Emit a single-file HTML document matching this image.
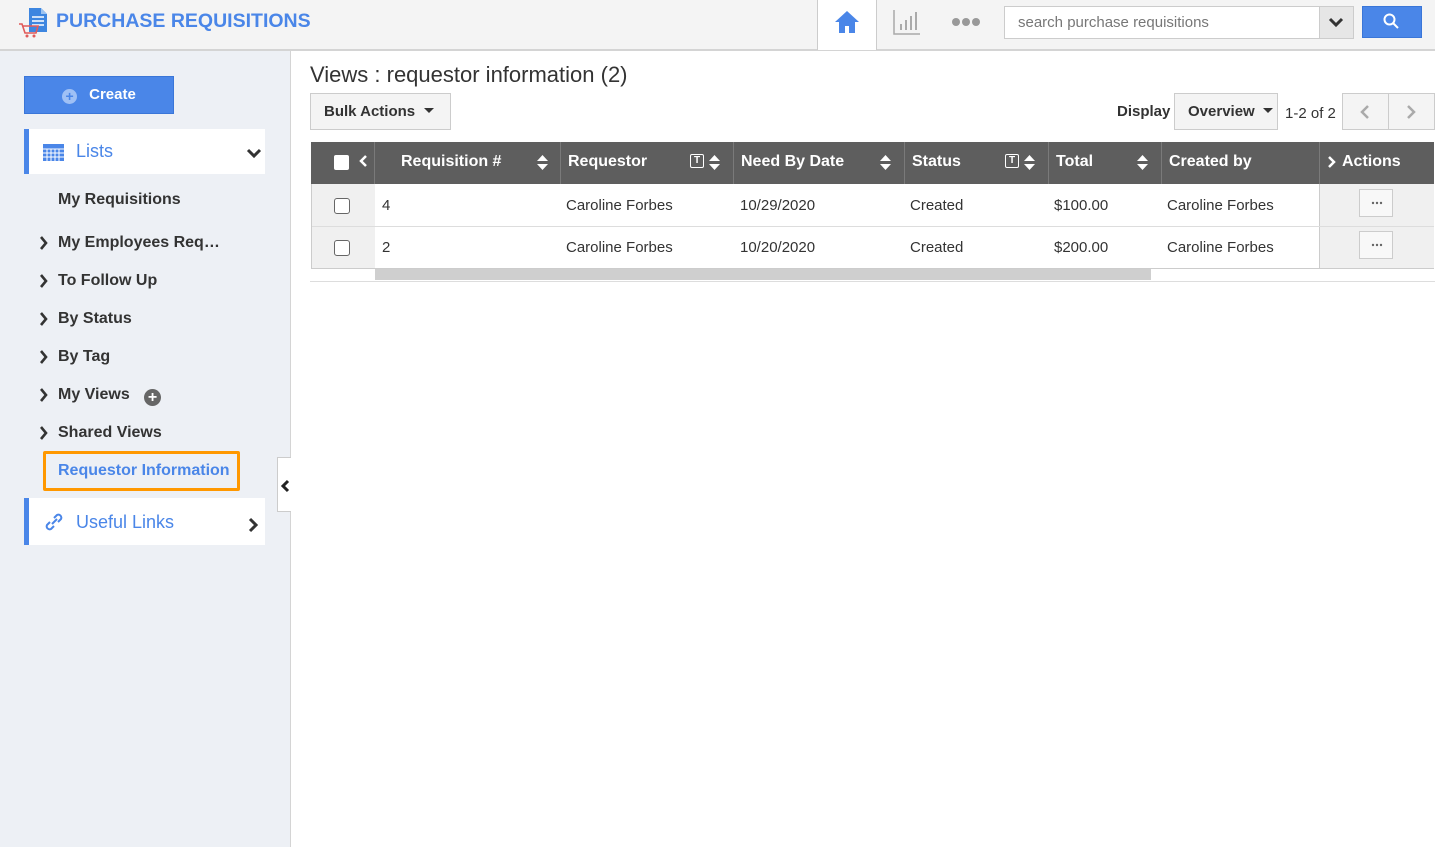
<!DOCTYPE html>
<html><head><meta charset="utf-8"><style>
*{box-sizing:border-box;margin:0;padding:0}
body{width:1435px;height:847px;position:relative;font-family:"Liberation Sans",Arial,sans-serif;background:#fff;overflow:hidden;color:#333}
.a{position:absolute}
.hdr{left:0;top:0;width:1435px;height:51px;background:#f4f4f4;border-bottom:2px solid #d4d4d4}
.side{left:0;top:51px;width:291px;height:796px;background:#edf0f5;border-right:1px solid #d4d4d4}
.nav{font-size:16px;font-weight:bold;color:#333}
.th{top:142px;height:42px;background:#5e5e5e;color:#fff;font-weight:bold;font-size:16px;line-height:40px;border-right:1px solid #7a7a7a;padding-left:7px}
.td{font-size:15px;line-height:42px;color:#333}
.cb{width:16px;height:16px;border:1px solid #666;border-radius:3px;background:#fff}
.srt{position:absolute;top:13px}
.flt{position:absolute;top:12px;width:14px;height:14px;border:1.5px solid #fff;border-radius:2px;font-size:10px;line-height:11px;text-align:center}
</style></head><body>
<div class="a hdr"></div>
<svg class="a" style="left:17px;top:6px" width="32" height="32" viewBox="0 0 32 32"><path d="M12 2h12l6 6v18H12z" fill="#3d86e0"/><path d="M24 2v6h6" fill="#9cc3f0"/><path d="M15 11h12M15 15h12M15 19h12" stroke="#fff" stroke-width="1.5"/><path d="M2 18h3l3 9h11l2-7H6" fill="none" stroke="#e05a5a" stroke-width="1.6"/><circle cx="10" cy="30" r="1.5" fill="#e05a5a"/><circle cx="17" cy="30" r="1.5" fill="#e05a5a"/></svg>
<div class="a" style="left:56px;top:10px;font-size:19.5px;font-weight:bold;color:#4a86e8">PURCHASE REQUISITIONS</div>
<div class="a" style="left:817px;top:0;width:60px;height:50px;background:#fff;border-left:1px solid #ccc;border-right:1px solid #ccc"></div>
<svg class="a" style="left:833px;top:8px" width="28" height="28" viewBox="0 0 28 28"><path d="M14 3L2 14h4v11h6v-7h4v7h6V14h4z" fill="#4a86e8"/></svg>
<svg class="a" style="left:892px;top:8px" width="30" height="28" viewBox="0 0 30 28"><path d="M2 2v24h26" fill="none" stroke="#aaa" stroke-width="1.5"/><path d="M9 22v-6M14 22v-10M19 22v-14M24 22v-18" stroke="#aaa" stroke-width="2"/></svg>
<svg class="a" style="left:951px;top:17px" width="30" height="10" viewBox="0 0 30 10"><circle cx="5" cy="5" r="4" fill="#999"/><circle cx="15" cy="5" r="4" fill="#999"/><circle cx="25" cy="5" r="4" fill="#999"/></svg>
<div class="a" style="left:1004px;top:6px;width:350px;height:33px;background:#fff;border:1px solid #ccc"></div>
<div class="a" style="left:1018px;top:14px;font-size:15px;color:#777">search purchase requisitions</div>
<div class="a" style="left:1319px;top:7px;width:34px;height:31px;background:#e6e6e6;border-left:1px solid #ccc"></div>
<svg class="a" style="left:1328px;top:17px" width="16" height="12" viewBox="0 0 16 12"><path d="M2 2l6 6 6-6" fill="none" stroke="#333" stroke-width="3"/></svg>
<div class="a" style="left:1362px;top:6px;width:60px;height:32px;background:#4a86e8;border:1px solid #3a76d8"></div>
<svg class="a" style="left:1382px;top:12px" width="18" height="18" viewBox="0 0 18 18"><circle cx="7.5" cy="7.5" r="5" fill="none" stroke="#fff" stroke-width="2"/><path d="M11 11l5 5" stroke="#fff" stroke-width="2"/></svg>

<div class="a side"></div>
<div class="a" style="left:24px;top:76px;width:150px;height:38px;background:#4a86e8;border:1px solid #3a76d8;color:#fff;font-weight:bold;font-size:15px;line-height:36px;text-align:center"><span style="display:inline-block;width:15px;height:15px;border-radius:50%;background:#9fc0f5;color:#4a86e8;font-size:14px;line-height:15px;margin-right:12px;vertical-align:-2px">+</span>Create</div>
<div class="a" style="left:24px;top:129px;width:241px;height:45px;background:#fff;border-left:5px solid #4a86e8"></div>
<svg class="a" style="left:43px;top:144px" width="21" height="17" viewBox="0 0 21 17"><rect x="0" y="0" width="21" height="17" fill="#4a86e8"/><path d="M0 5h21M0 9h21M0 13h21M4 5v12M8 5v12M12 5v12M16 5v12" stroke="#fff" stroke-width="1"/></svg>
<div class="a" style="left:76px;top:141px;font-size:18px;color:#4a86e8">Lists</div>
<svg class="a" style="left:246px;top:148px" width="16" height="12" viewBox="0 0 16 12"><path d="M2 2l6 6 6-6" fill="none" stroke="#333" stroke-width="3"/></svg>
<div class="a nav" style="left:58px;top:191px">My Requisitions</div>
<svg class="a" style="left:39px;top:235px" width="10" height="16" viewBox="0 0 10 16"><path d="M2 2l5 6-5 6" fill="none" stroke="#333" stroke-width="2.6"/></svg>
<div class="a nav" style="left:58px;top:234px">My Employees Req…</div>
<svg class="a" style="left:39px;top:273px" width="10" height="16" viewBox="0 0 10 16"><path d="M2 2l5 6-5 6" fill="none" stroke="#333" stroke-width="2.6"/></svg>
<div class="a nav" style="left:58px;top:272px">To Follow Up</div>
<svg class="a" style="left:39px;top:311px" width="10" height="16" viewBox="0 0 10 16"><path d="M2 2l5 6-5 6" fill="none" stroke="#333" stroke-width="2.6"/></svg>
<div class="a nav" style="left:58px;top:310px">By Status</div>
<svg class="a" style="left:39px;top:349px" width="10" height="16" viewBox="0 0 10 16"><path d="M2 2l5 6-5 6" fill="none" stroke="#333" stroke-width="2.6"/></svg>
<div class="a nav" style="left:58px;top:348px">By Tag</div>
<svg class="a" style="left:39px;top:387px" width="10" height="16" viewBox="0 0 10 16"><path d="M2 2l5 6-5 6" fill="none" stroke="#333" stroke-width="2.6"/></svg>
<div class="a nav" style="left:58px;top:386px">My Views</div>
<div class="a" style="left:144px;top:389px;width:17px;height:17px;border-radius:50%;background:#666;color:#fff;font-weight:bold;font-size:16px;line-height:17px;text-align:center">+</div>
<svg class="a" style="left:39px;top:425px" width="10" height="16" viewBox="0 0 10 16"><path d="M2 2l5 6-5 6" fill="none" stroke="#333" stroke-width="2.6"/></svg>
<div class="a nav" style="left:58px;top:424px">Shared Views</div>
<div class="a" style="left:43px;top:451px;width:197px;height:40px;border:3px solid #ff9800;border-radius:2px"></div>
<div class="a" style="left:58px;top:462px;font-size:16px;font-weight:bold;color:#4a86e8">Requestor Information</div>
<div class="a" style="left:24px;top:498px;width:241px;height:47px;background:#fff;border-left:5px solid #4a86e8"></div>
<svg class="a" style="left:44px;top:513px" width="20" height="18" viewBox="0 0 20 18"><path d="M8 11l5-5M6 9l-3 3a3 3 0 004 4l3-3M14 9l3-3a3 3 0 00-4-4l-3 3" fill="none" stroke="#4a86e8" stroke-width="2"/></svg>
<div class="a" style="left:76px;top:512px;font-size:18px;color:#4a86e8">Useful Links</div>
<svg class="a" style="left:248px;top:517px" width="12" height="16" viewBox="0 0 12 16"><path d="M2 2l6 6-6 6" fill="none" stroke="#333" stroke-width="3"/></svg>
<div class="a" style="left:277px;top:457px;width:14px;height:55px;background:#fff;border:1px solid #ccc;border-right:none"></div>
<svg class="a" style="left:280px;top:479px" width="10" height="14" viewBox="0 0 10 14"><path d="M8 2L3 7l5 5" fill="none" stroke="#222" stroke-width="3"/></svg>

<div class="a" style="left:310px;top:62px;font-size:22px;color:#333">Views : requestor information (2)</div>
<div class="a" style="left:310px;top:93px;width:141px;height:37px;background:#f4f4f4;border:1px solid #ccc;font-size:15px;font-weight:bold;line-height:35px;padding-left:13px">Bulk Actions <svg width="10" height="6" style="margin-left:5px;vertical-align:2px"><path d="M0 0h10L5 5z" fill="#333"/></svg></div>
<div class="a" style="left:1117px;top:103px;font-size:15px;font-weight:bold">Display</div>
<div class="a" style="left:1174px;top:93px;width:104px;height:37px;background:#f4f4f4;border:1px solid #ccc;font-size:15px;font-weight:bold;line-height:35px;padding-left:13px">Overview <svg width="10" height="6" style="margin-left:4px;vertical-align:2px"><path d="M0 0h10L5 5z" fill="#333"/></svg></div>
<div class="a" style="left:1285px;top:105px;font-size:15px">1-2 of 2</div>
<div class="a" style="left:1342px;top:93px;width:93px;height:37px;background:#f4f4f4;border:1px solid #ccc"></div>
<div class="a" style="left:1388px;top:93px;width:1px;height:37px;background:#ccc"></div>
<svg class="a" style="left:1359px;top:104px" width="12" height="16" viewBox="0 0 12 16"><path d="M9 2L3 8l6 6" fill="none" stroke="#aaa" stroke-width="2.5"/></svg>
<svg class="a" style="left:1405px;top:104px" width="12" height="16" viewBox="0 0 12 16"><path d="M3 2l6 6-6 6" fill="none" stroke="#aaa" stroke-width="2.5"/></svg>

<div class="a" style="left:311px;top:184px;width:64px;height:85px;background:#f0f0f0"></div>
<div class="a" style="left:1319px;top:184px;width:115px;height:85px;background:#f0f0f0;border-left:1px solid #ccc"></div>
<div class="a" style="left:311px;top:226px;width:1123px;height:1px;background:#ddd"></div>
<div class="a" style="left:311px;top:268px;width:1123px;height:1px;background:#ccc"></div>
<div class="a" style="left:311px;top:184px;width:1px;height:85px;background:#ccc"></div>
<div class="a" style="left:375px;top:269px;width:776px;height:11px;background:#cfcfcf"></div>
<div class="a" style="left:310px;top:281px;width:1125px;height:1px;background:#ddd"></div>

<div class="a th" style="left:311px;width:64px"></div>
<div class="a" style="left:334px;top:155px;width:15px;height:15px;background:#fff;border-radius:2px"></div>
<svg class="a" style="left:358px;top:154px" width="10" height="14" viewBox="0 0 10 14"><path d="M8 2L3 7l5 5" fill="none" stroke="#fff" stroke-width="2.5"/></svg>
<div class="a th" style="left:375px;width:186px;padding-left:26px">Requisition #<svg class="srt" style="left:162px" width="11" height="15"><path d="M0 6L5.5 0 11 6zM0 9l5.5 6L11 9z" fill="#fff"/></svg></div>
<div class="a th" style="left:561px;width:173px">Requestor<span class="flt" style="left:129px">T</span><svg class="srt" style="left:148px" width="11" height="15"><path d="M0 6L5.5 0 11 6zM0 9l5.5 6L11 9z" fill="#fff"/></svg></div>
<div class="a th" style="left:734px;width:171px">Need By Date<svg class="srt" style="left:146px" width="11" height="15"><path d="M0 6L5.5 0 11 6zM0 9l5.5 6L11 9z" fill="#fff"/></svg></div>
<div class="a th" style="left:905px;width:144px">Status<span class="flt" style="left:100px">T</span><svg class="srt" style="left:119px" width="11" height="15"><path d="M0 6L5.5 0 11 6zM0 9l5.5 6L11 9z" fill="#fff"/></svg></div>
<div class="a th" style="left:1049px;width:113px">Total<svg class="srt" style="left:88px" width="11" height="15"><path d="M0 6L5.5 0 11 6zM0 9l5.5 6L11 9z" fill="#fff"/></svg></div>
<div class="a th" style="left:1162px;width:158px">Created by</div>
<div class="a th" style="left:1320px;width:114px;border-right:none;padding-left:22px">Actions</div>
<svg class="a" style="left:1327px;top:155px" width="10" height="14" viewBox="0 0 10 14"><path d="M2 2l5 5-5 5" fill="none" stroke="#fff" stroke-width="2.5"/></svg>

<div class="a cb" style="left:334px;top:198px"></div>
<div class="a cb" style="left:334px;top:240px"></div>
<div class="a td" style="left:382px;top:185px">4</div>
<div class="a td" style="left:382px;top:227px">2</div>
<div class="a td" style="left:566px;top:185px">Caroline Forbes</div>
<div class="a td" style="left:566px;top:227px">Caroline Forbes</div>
<div class="a td" style="left:740px;top:185px">10/29/2020</div>
<div class="a td" style="left:740px;top:227px">10/20/2020</div>
<div class="a td" style="left:910px;top:185px">Created</div>
<div class="a td" style="left:910px;top:227px">Created</div>
<div class="a td" style="left:1054px;top:185px">$100.00</div>
<div class="a td" style="left:1054px;top:227px">$200.00</div>
<div class="a td" style="left:1167px;top:185px">Caroline Forbes</div>
<div class="a td" style="left:1167px;top:227px">Caroline Forbes</div>
<div class="a" style="left:1359px;top:189px;width:34px;height:28px;background:#f8f8f8;border:1px solid #ccc"><svg class="a" style="left:11px;top:11px" width="12" height="4"><circle cx="2" cy="2" r="1.2" fill="#666"/><circle cx="6" cy="2" r="1.2" fill="#666"/><circle cx="10" cy="2" r="1.2" fill="#666"/></svg></div>
<div class="a" style="left:1359px;top:231px;width:34px;height:28px;background:#f8f8f8;border:1px solid #ccc"><svg class="a" style="left:11px;top:11px" width="12" height="4"><circle cx="2" cy="2" r="1.2" fill="#666"/><circle cx="6" cy="2" r="1.2" fill="#666"/><circle cx="10" cy="2" r="1.2" fill="#666"/></svg></div>
</body></html>
